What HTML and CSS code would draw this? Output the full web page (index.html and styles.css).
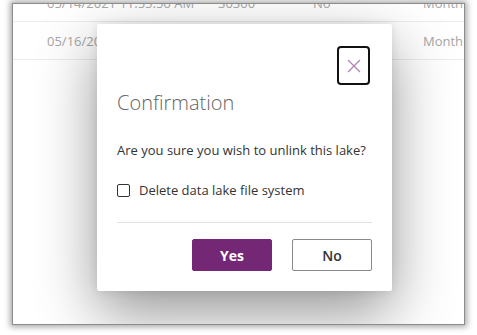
FILE: index.html
```html
<!DOCTYPE html>
<html lang="en">
<head>
    <meta charset="UTF-8">
    <title>Confirmation</title>
    <link rel="stylesheet" href="styles.css">
</head>
<body>

    <!-- Page behind the dialog -->
    <div class="frame">
        <div class="rows">
            <div class="row">
                <span class="col-date">05/14/2021 11:55:56 AM</span>
                <span class="col-size">30300</span>
                <span class="col-flag">No</span>
                <span class="col-period">Month</span>
            </div>
            <div class="row">
                <span class="col-date">05/16/2021 09:12:40 AM</span>
                <span class="col-size">30300</span>
                <span class="col-flag">No</span>
                <span class="col-period">Month</span>
            </div>
        </div>

        <!-- Confirmation dialog -->
        <div class="dialog">
            <div class="dialog-top">
                <button class="close-btn" aria-label="Close">
                    <svg width="14" height="14" viewBox="0 0 14 14">
                        <path d="M1 1 L13 13 M13 1 L1 13" stroke="#b27fb4" stroke-width="1.2" fill="none"/>
                    </svg>
                </button>
            </div>
            <h2 class="title">Confirmation</h2>
            <p class="message">Are you sure you wish to unlink this lake?</p>
            <label class="check">
                <span class="box"></span>
                Delete data lake file system
            </label>
            <div class="actions">
                <button class="btn primary">Yes</button>
                <button class="btn">No</button>
            </div>
        </div>
    </div>

</body>
</html>
```

FILE: styles.css
```css
* {
    margin: 0;
    padding: 0;
    box-sizing: border-box;
}
body {
    font-family: 'Open Sans', sans-serif;
    background: #fff;
    width: 477px;
    height: 335px;
    overflow: hidden;
    padding: 3px 12px 0 12px;
}
.frame {
    position: relative;
    height: 322px;
    background: #fff;
    border: 1px solid #8c8c8c;
    box-shadow: 0 0 6px 2px rgba(0, 0, 0, 0.35);
    overflow: hidden;
}
.rows {
    margin-top: -20px;
}
.row {
    display: flex;
    height: 38px;
    align-items: center;
    border-bottom: 1px solid #ececec;
    color: #a6a6a6;
    font-size: 13px;
    padding-left: 34px;
}
.col-date {
    width: 171px;
}
.col-size {
    width: 95px;
}
.col-flag {
    width: 110px;
}
.dialog {
    position: absolute;
    left: 84px;
    top: 20px;
    width: 295px;
    height: 267px;
    background: #fff;
    border-radius: 2px;
    box-shadow: 0 22px 60px rgba(0, 0, 0, 0.42), 0 0 10px rgba(0, 0, 0, 0.1);
    padding: 22px 20px 0 20px;
}
.dialog-top {
    display: flex;
    justify-content: flex-end;
    padding-right: 2px;
}
.close-btn {
    width: 33px;
    height: 39px;
    border: 2px solid #111;
    border-radius: 4px;
    background: #fff;
    display: flex;
    align-items: center;
    justify-content: center;
}
.title {
    font-weight: 300;
    font-size: 20px;
    color: #646464;
    margin-top: 5px;
    line-height: 26px;
}
.message {
    font-size: 13px;
    color: #333;
    margin-top: 25px;
    line-height: 18px;
    white-space: nowrap;
}
.check {
    display: flex;
    align-items: center;
    gap: 9px;
    font-size: 13px;
    color: #333;
    margin-top: 22px;
    line-height: 18px;
}
.box {
    width: 13px;
    height: 13px;
    border: 1px solid #333;
    border-radius: 2px;
}
.actions {
    display: flex;
    justify-content: flex-end;
    gap: 20px;
    border-top: 1px solid #e1e1e1;
    margin-top: 23px;
    padding-top: 16px;
}
.btn {
    width: 80px;
    height: 32px;
    border: 1px solid #8a8a8a;
    border-radius: 2px;
    background: #fff;
    color: #333;
    font-family: 'Open Sans', sans-serif;
    font-size: 14px;
    font-weight: 600;
}
.primary {
    background: #742774;
    border-color: #742774;
    color: #fff;
    font-weight: 700;
}
```
